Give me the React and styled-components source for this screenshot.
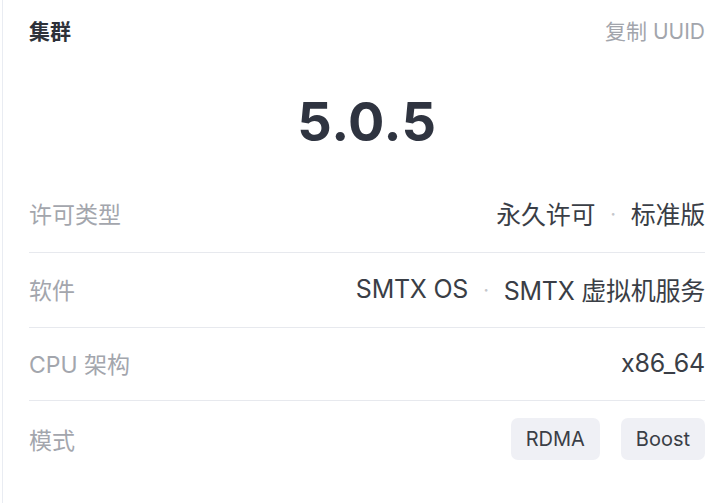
import React from 'react';
import styled, { createGlobalStyle } from 'styled-components';

// ─── Global ───────────────────────────────────────────────────────────────────
const GlobalStyle = createGlobalStyle`
  html, body {
    margin: 0;
    padding: 0;
    background: #FFFFFF;
  }
  body {
    font-family: "Inter", "Noto Sans CJK SC", sans-serif;
    -webkit-font-smoothing: antialiased;
  }
`;

// ─── Card ─────────────────────────────────────────────────────────────────────
const Page = styled.div`
  width: 727px;
  height: 503px;
  padding-left: 2px;
  box-sizing: border-box;
`;

const Card = styled.div`
  height: 100%;
  box-sizing: border-box;
  border-left: 1px solid #E9ECF2;
  padding: 0 22px 0 26px;
  display: flex;
  flex-direction: column;
`;

const Header = styled.div`
  height: 60px;
  display: flex;
  align-items: center;
  justify-content: space-between;
`;

const Title = styled.h3`
  margin: 0;
  font-size: 21px;
  font-weight: 700;
  color: #2D3139;
`;

const CopyLink = styled.span`
  font-size: 21px;
  color: #A2A5AC;
  cursor: pointer;
`;

const Version = styled.div`
  height: 117px;
  display: flex;
  align-items: center;
  justify-content: center;
  padding-top: 6px;
  box-sizing: border-box;
  font-size: 54px;
  font-weight: 700;
  color: #2F3440;
  letter-spacing: 0.5px;
`;

// ─── Rows ─────────────────────────────────────────────────────────────────────
const Row = styled.div`
  height: ${({ $h }) => $h || 75}px;
  box-sizing: border-box;
  padding-bottom: ${({ $last }) => ($last ? 0 : 3)}px;
  display: flex;
  align-items: center;
  justify-content: space-between;
  border-bottom: ${({ $last }) => ($last ? 'none' : '1px solid #E7E9EE')};
`;

const Label = styled.span`
  font-size: 23px;
  color: #A3A6AD;
`;

const Value = styled.span`
  font-size: 25px;
  letter-spacing: -0.25px;
  color: #3A3E46;
  display: flex;
  align-items: center;
`;

const Dot = styled.span`
  color: #C4C7CC;
  font-size: 20px;
  margin: 2px 15px 0;
`;

const Tags = styled.div`
  display: flex;
  gap: 21px;
`;

const Tag = styled.span`
  height: 42px;
  padding: 0 15px;
  border-radius: 7px;
  background: #EFF0F5;
  color: #3A3E46;
  font-size: 20px;
  display: flex;
  align-items: center;
`;

// ─── Component ────────────────────────────────────────────────────────────────
const joined = (parts) =>
  parts.flatMap((p, i) => (i === 0 ? [p] : [<Dot key={`d${i}`}>·</Dot>, p]));

export default function App() {
  return (
    <>
      <GlobalStyle />
      <Page>
        <Card>
          <Header>
            <Title>集群</Title>
            <CopyLink>复制 UUID</CopyLink>
          </Header>

          <Version>5.0.5</Version>

          <Row $h={76}>
            <Label>许可类型</Label>
            <Value>{joined(['永久许可', '标准版'])}</Value>
          </Row>
          <Row>
            <Label>软件</Label>
            <Value>{joined(['SMTX OS', 'SMTX 虚拟机服务'])}</Value>
          </Row>
          <Row $h={73}>
            <Label>CPU 架构</Label>
            <Value>x86_64</Value>
          </Row>
          <Row $last>
            <Label>模式</Label>
            <Tags>
              <Tag>RDMA</Tag>
              <Tag>Boost</Tag>
            </Tags>
          </Row>
        </Card>
      </Page>
    </>
  );
}
